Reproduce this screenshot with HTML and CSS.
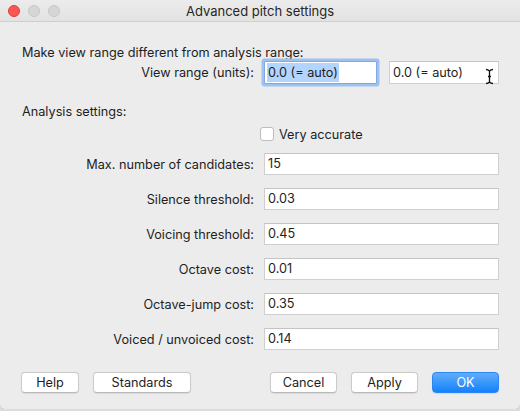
FILE: index.html
```html
<!DOCTYPE html>
<html lang="en">
<head>
<meta charset="utf-8">
<title>Advanced pitch settings</title>
<link rel="stylesheet" href="styles.css">
</head>
<body>
<div class="window">
  <div class="titlebar">
    <div class="lights">
      <span class="light close"></span>
      <span class="light off"></span>
      <span class="light off"></span>
    </div>
    <div class="title">Advanced pitch settings</div>
  </div>
  <div class="content">
    <div class="heading first">Make view range different from analysis range:</div>
    <div class="grid view-row">
      <div class="label">View range (units):</div>
      <div class="pair">
        <div class="field focused"><span class="sel">0.0 (= auto)</span></div>
        <div class="field second">0.0 (= auto)
          <svg class="ibeam" width="9" height="17" viewBox="0 0 9 17"><path d="M1 1.5 Q3 1.5 4.5 3 Q6 1.5 8 1.5 M4.5 3 V14 M1 15.5 Q3 15.5 4.5 14 Q6 15.5 8 15.5 M3 8.5 H6" fill="none" stroke="#111" stroke-width="1.3"/></svg>
        </div>
      </div>
    </div>
    <div class="heading second-head">Analysis settings:</div>
    <div class="check-row"><span class="checkbox"></span><span>Very accurate</span></div>
    <div class="grid rows">
      <div class="label">Max. number of candidates:</div><div class="field">15</div>
      <div class="label">Silence threshold:</div><div class="field">0.03</div>
      <div class="label">Voicing threshold:</div><div class="field">0.45</div>
      <div class="label">Octave cost:</div><div class="field">0.01</div>
      <div class="label">Octave-jump cost:</div><div class="field">0.35</div>
      <div class="label">Voiced / unvoiced cost:</div><div class="field">0.14</div>
    </div>
    <div class="buttons">
      <button class="btn help">Help</button>
      <button class="btn standards">Standards</button>
      <button class="btn cancel">Cancel</button>
      <button class="btn apply">Apply</button>
      <button class="btn ok">OK</button>
    </div>
  </div>
</div>
</body>
</html>
```
FILE: styles.css
```css
html, body {
  margin: 0;
  padding: 0;
  background: #dcdcdc;
}
body {
  font-family: "Inter", "Liberation Sans", sans-serif;
  font-size: 12.7px;
  color: #1e1e1e;
}
.window {
  width: 520px;
  height: 409px;
  background: #ececec;
  border-radius: 0 0 5px 5px;
  overflow: hidden;
  box-shadow: 0 1px 0 #c9c9c9;
}
.titlebar {
  height: 21px;
  border-bottom: 1px solid #cfcfcf;
  background: linear-gradient(#ececec, #e2e2e2);
  display: flex;
  align-items: center;
  position: relative;
}
.lights {
  display: flex;
  gap: 8px;
  padding-left: 8px;
  position: absolute;
  left: 0;
  top: 5px;
}
.light {
  width: 12px;
  height: 12px;
  border-radius: 50%;
  box-sizing: border-box;
}
.light.close {
  background: #fc5753;
  border: 0.5px solid #df3d38;
}
.light.off {
  background: #d6d6d6;
  border: 0.5px solid #c6c6c6;
}
.title {
  flex: 1;
  text-align: center;
  font-size: 13px;
  color: #262626;
  padding-top: 1px;
}
.content {
  padding: 0 21px;
}
.heading {
  line-height: 16px;
  padding-left: 1px;
}
.heading.first {
  margin-top: 23px;
}
.heading.second-head {
  margin-top: 20px;
}
.grid {
  display: grid;
  grid-template-columns: 233px 235px;
  column-gap: 10px;
  align-items: center;
}
.label {
  text-align: right;
}
.view-row {
  height: 23px;
}
.pair {
  display: flex;
  gap: 12px;
}
.field {
  box-sizing: border-box;
  height: 22px;
  line-height: 20px;
  background: #fff;
  border: 1px solid #cfcfcf;
  border-top-color: #c4c4c4;
  padding: 0 3px;
  position: relative;
}
.pair .field {
  height: 23px;
  line-height: 21px;
}
.field.focused {
  width: 113px;
  border-color: #7ea9e6;
  border-radius: 1px;
  box-shadow: 0 0 0 2.5px #9dc1f1;
  padding-left: 2px;
}
.field.second {
  width: 110px;
}
.sel {
  background: #b3d4fd;
  padding: 2px 1px;
}
.ibeam {
  position: absolute;
  left: 95px;
  top: 6px;
}
.check-row {
  margin-top: 7px;
  padding-left: 239px;
  display: flex;
  align-items: center;
  gap: 5px;
  height: 14px;
}
.checkbox {
  width: 14px;
  height: 14px;
  box-sizing: border-box;
  border: 1px solid #bdbdbd;
  border-radius: 3px;
  background: #fff;
}
.rows {
  margin-top: 12px;
  row-gap: 13px;
}
.buttons {
  margin-top: 22px;
  display: flex;
  gap: 14px;
}
.btn {
  font-family: inherit;
  font-size: 12.7px;
  color: #1e1e1e;
  height: 21px;
  padding: 0;
  background: #fff;
  border: 1px solid #cbcbcb;
  border-bottom-color: #b9b9b9;
  border-radius: 4px;
  box-shadow: 0 0.5px 1px rgba(0,0,0,0.08);
}
.help { width: 58px; }
.standards { width: 98px; }
.cancel { width: 67px; margin-left: auto; }
.apply { width: 67px; }
.ok {
  width: 67px;
  color: #fff;
  border: 1px solid #2a86f5;
  background: linear-gradient(#62acfa, #1482fb);
}
```
